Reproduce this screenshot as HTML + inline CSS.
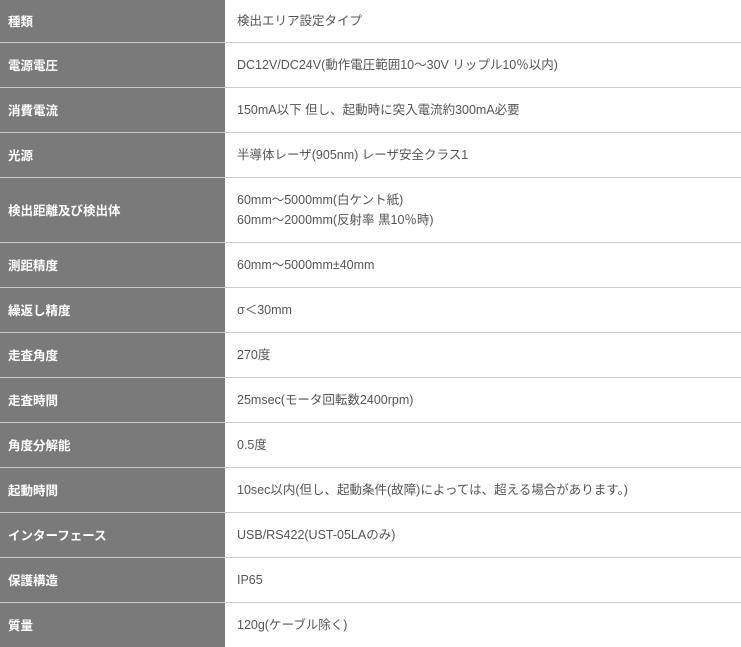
<!DOCTYPE html><html><head><meta charset="utf-8"><style>
body{margin:0;background:#fff;font-family:"Liberation Sans","Noto Sans CJK JP",sans-serif;font-size:12.5px}
table{border-collapse:collapse;width:741px}
th,td{vertical-align:middle;line-height:20px}
th{background:#7a7a7a;color:#fff;font-weight:bold;text-align:left;width:217px;padding:0 0 0 8px;border-bottom:1px solid #ccc;height:44px}
th span{position:relative;top:1px}
td{color:#555;padding:0 0 0 12px;border-bottom:1px solid #ccc;height:44px}
tr:first-child th,tr:first-child td{height:42px}
tr.t th,tr.t td{height:64px}
tr:last-child th,tr:last-child td{border-bottom:none}
</style></head><body><table>
<tr><th><span>種類</span></th><td>検出エリア設定タイプ</td></tr>
<tr><th><span>電源電圧</span></th><td>DC12V/DC24V(動作電圧範囲10～30V リップル10％以内)</td></tr>
<tr><th><span>消費電流</span></th><td>150mA以下 但し、起動時に突入電流約300mA必要</td></tr>
<tr><th><span>光源</span></th><td>半導体レーザ(905nm) レーザ安全クラス1</td></tr>
<tr class="t"><th><span>検出距離及び検出体</span></th><td>60mm～5000mm(白ケント紙)<br>60mm～2000mm(反射率 黒10％時)</td></tr>
<tr><th><span>測距精度</span></th><td>60mm～5000mm±40mm</td></tr>
<tr><th><span>繰返し精度</span></th><td>σ＜30mm</td></tr>
<tr><th><span>走査角度</span></th><td>270度</td></tr>
<tr><th><span>走査時間</span></th><td>25msec(モータ回転数2400rpm)</td></tr>
<tr><th><span>角度分解能</span></th><td>0.5度</td></tr>
<tr><th><span>起動時間</span></th><td>10sec以内(但し、起動条件(故障)によっては、超える場合があります。)</td></tr>
<tr><th><span>インターフェース</span></th><td>USB/RS422(UST-05LAのみ)</td></tr>
<tr><th><span>保護構造</span></th><td>IP65</td></tr>
<tr><th><span>質量</span></th><td>120g(ケーブル除く)</td></tr>
</table></body></html>
